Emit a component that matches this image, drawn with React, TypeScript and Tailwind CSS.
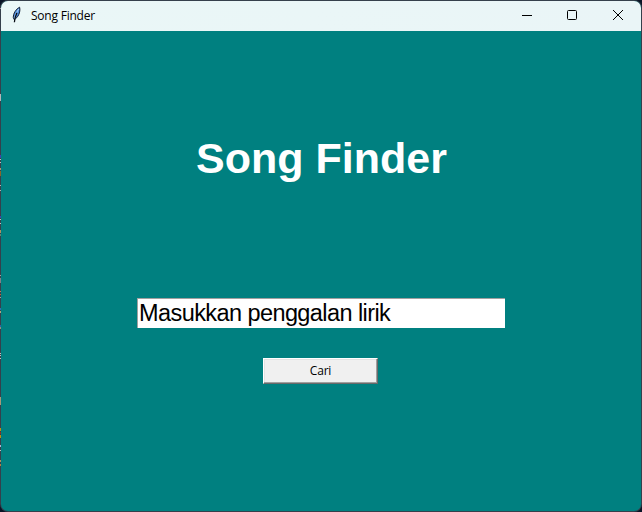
import React from "react";

const edgeMarks: { top: number; height: number; color: string }[] = [
  { top: 8, height: 1, color: "#8d949c" },
  { top: 94, height: 7, color: "#b4b4b8" },
  { top: 155, height: 3, color: "#4040b0" },
  { top: 159, height: 1, color: "#c0c0c0" },
  { top: 162, height: 1, color: "#c0c0c0" },
  { top: 168, height: 2, color: "#b09070" },
  { top: 171, height: 5, color: "#8a6428" },
  { top: 185, height: 1, color: "#b0b0b0" },
  { top: 190, height: 1, color: "#b0b0b0" },
  { top: 216, height: 2, color: "#4040b0" },
  { top: 219, height: 1, color: "#c0c0c0" },
  { top: 223, height: 1, color: "#c0c0c0" },
  { top: 230, height: 3, color: "#b09060" },
  { top: 234, height: 2, color: "#5a8a70" },
  { top: 275, height: 1, color: "#a0a0a0" },
  { top: 278, height: 5, color: "#808088" },
  { top: 291, height: 1, color: "#c08060" },
  { top: 294, height: 1, color: "#c06030" },
  { top: 297, height: 1, color: "#a0a0a0" },
  { top: 308, height: 2, color: "#3070b0" },
  { top: 311, height: 2, color: "#b0a880" },
  { top: 325, height: 2, color: "#3060a0" },
  { top: 327, height: 2, color: "#909080" },
  { top: 353, height: 1, color: "#c0c0c0" },
  { top: 355, height: 1, color: "#c0c0c0" },
  { top: 358, height: 1, color: "#c0c0c0" },
  { top: 397, height: 8, color: "#a89878" },
  { top: 428, height: 3, color: "#c09010" },
  { top: 432, height: 2, color: "#903020" },
  { top: 435, height: 3, color: "#c09010" },
  { top: 445, height: 2, color: "#b0b0d0" },
  { top: 450, height: 1, color: "#c0c0c0" },
  { top: 460, height: 2, color: "#b09060" },
  { top: 464, height: 2, color: "#b08040" },
];

function FeatherIcon() {
  return (
    <svg width="16" height="18" viewBox="0 0 16 18" fill="none">
      <path d="M10.6 1.2C7 3.2 4.2 7.2 4.3 11.6L5.2 13.6C8.8 11.8 11.8 6.4 10.6 1.2Z" fill="#4b8be0" stroke="#101c30" strokeWidth="1" />
      <path d="M9.6 3C8 6 6.2 9 5.4 12.4" stroke="#b9dcff" strokeWidth="1" />
      <path d="M7.9 6.8C6.6 9.6 5.6 12.4 5.4 16.2" stroke="#080c14" strokeWidth="1.3" />
    </svg>
  );
}

function TitleBar() {
  return (
    <header className="flex h-[30px] shrink-0 items-center bg-gradient-to-r from-[#eaf7f7] to-[#eaf5f7]">
      <div className="ml-2 flex h-[30px] w-[22px] items-start pt-[5px]">
        <FeatherIcon />
      </div>
      <h1 className="w-16 whitespace-nowrap font-['Open_Sans',sans-serif] text-[12px] leading-[30px] tracking-[-0.22px] text-black">
        Song Finder
      </h1>
      <div className="ml-auto flex h-full items-start">
        <button aria-label="Minimize" className="flex h-7 w-[45px] items-center justify-center">
          <svg width="10" height="10" viewBox="0 0 10 10"><path d="M0 5.5H10" stroke="#000" /></svg>
        </button>
        <button aria-label="Maximize" className="flex h-7 w-[46px] items-center justify-center">
          <svg width="10" height="10" viewBox="0 0 10 10"><rect x=".5" y=".5" width="9" height="9" rx="1" fill="none" stroke="#000" /></svg>
        </button>
        <button aria-label="Close" className="flex h-7 w-[46px] items-center justify-center">
          <svg width="10" height="10" viewBox="0 0 10 10"><path d="M0 0L10 10M10 0L0 10" stroke="#000" /></svg>
        </button>
      </div>
    </header>
  );
}

export default function App() {
  return (
    <div className="relative h-[512px] w-[642px] overflow-hidden bg-[#091426]">
      <div className="h-full rounded-lg bg-[#35404c] p-px">
        <main className="flex h-full flex-col overflow-hidden rounded-[7px] bg-[#008080]">
          <TitleBar />
          <section className="flex flex-col items-center">
            <h2 className="ml-px mt-[102px] h-[50px] whitespace-nowrap font-['Liberation_Sans',Arial,sans-serif] text-[43px] font-bold leading-[50px] text-white">
              Song Finder
            </h2>
            <input
              defaultValue="Masukkan penggalan lirik"
              className="mt-[115px] h-[30px] w-[368px] border-l border-t border-[#a0a0a0] bg-white px-px font-['Liberation_Sans',Arial,sans-serif] text-[23.5px] tracking-[-0.58px] text-black outline-none"
            />
            <button className="mr-px mt-[30px] h-[26px] w-[115px] border border-b-[#696969] border-l-white border-r-[#696969] border-t-white bg-[#f0f0f0] font-['Open_Sans',sans-serif] text-[12px] leading-[22px] tracking-[-0.2px] text-black shadow-[inset_-1px_-1px_0_#a0a0a0,inset_1px_1px_0_#e3e3e3]">
              Cari
            </button>
          </section>
        </main>
      </div>
      {edgeMarks.map((mark) => (
        <span
          key={mark.top}
          className="absolute left-0 w-px"
          style={{ top: mark.top, height: mark.height, backgroundColor: mark.color }}
        />
      ))}
    </div>
  );
}
